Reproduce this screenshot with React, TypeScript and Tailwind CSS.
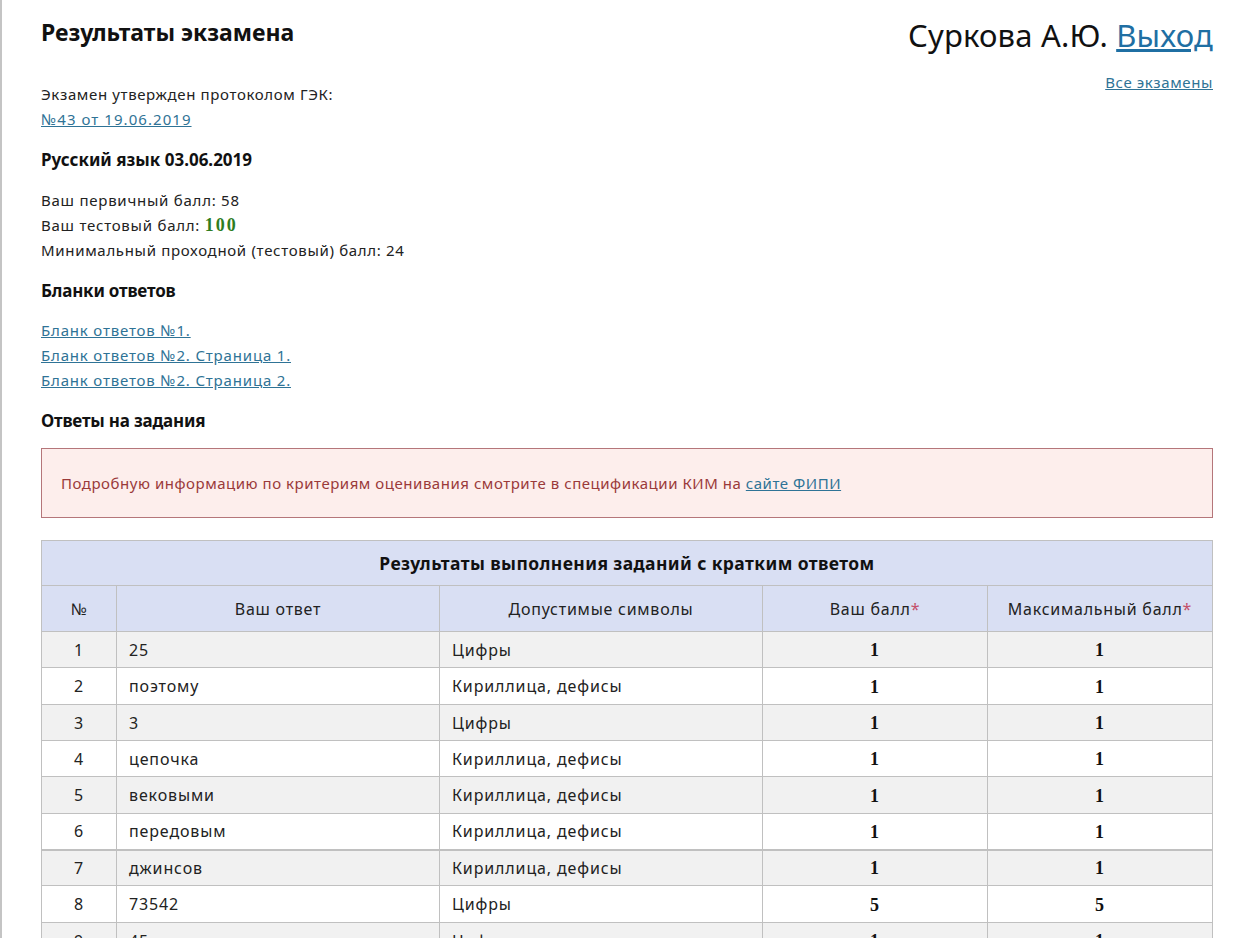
const rows = [
  ['1', '25', 'Цифры', '1', '1', 'h-[36px]'],
  ['2', 'поэтому', 'Кириллица, дефисы', '1', '1', 'h-[37px]'],
  ['3', '3', 'Цифры', '1', '1', 'h-[36px]'],
  ['4', 'цепочка', 'Кириллица, дефисы', '1', '1', 'h-[36px]'],
  ['5', 'вековыми', 'Кириллица, дефисы', '1', '1', 'h-[37px]'],
  ['6', 'передовым', 'Кириллица, дефисы', '1', '1', 'h-[36px]'],
  ['7', 'джинсов', 'Кириллица, дефисы', '1', '1', 'h-[36px]'],
  ['8', '73542', 'Цифры', '5', '5', 'h-[37px]'],
  ['9', '45', 'Цифры', '1', '1', 'h-[36px]'],
]

const linkCls = 'text-[#2f7396] underline'
const cellCls = 'border border-[#c0c0c0] p-0'
const headingCls = "text-[17px] leading-[24px] font-bold text-[#111] font-['Noto_Sans',sans-serif]"
const scoreCls = "pt-[2px] text-center font-bold text-[18px] text-[#111] font-['Liberation_Serif',serif]"

function Star() {
  return <span className="text-[#c4506a]">*</span>
}

export default function App() {
  return (
    <div className="h-[938px] overflow-hidden bg-white border-l-2 border-[#c4c4c4] pl-[39px] pr-[41px] font-['Noto_Sans',sans-serif] text-[15px] tracking-[0.75px] text-[#222]">
      <div className="flex justify-between">
        <div className="pt-[17px]">
          <h1 className="text-[23px] leading-[30px] font-bold tracking-normal text-[#111]">Результаты экзамена</h1>
          <p className="mt-[35px] leading-[25px] tracking-[0.63px]">Экзамен утвержден протоколом ГЭК:</p>
          <a className={`${linkCls} block leading-[25px] tracking-[1.05px]`}>№43 от 19.06.2019</a>
        </div>
        <div className="text-right">
          <div className="pt-[15px] text-[31px] leading-[40px] tracking-[0.2px] text-[#111]">
            Суркова А.Ю. <a className="text-[#1f6fa3] underline">Выход</a>
          </div>
          <a className={`${linkCls} block mt-[17px] leading-[20px] tracking-[0.6px]`}>Все экзамены</a>
        </div>
      </div>

      <h2 className={`mt-[16px] tracking-normal ${headingCls}`}>Русский язык 03.06.2019</h2>
      <div className="mt-[16px] leading-[25px]">
        <p>Ваш первичный балл: 58</p>
        <p>
          Ваш тестовый балл: <b className="font-['Liberation_Serif',serif] text-[18px] tracking-[2px] text-[#2e7d1e]">100</b>
        </p>
        <p className="tracking-[0.68px]">Минимальный проходной (тестовый) балл: 24</p>
      </div>

      <h2 className={`mt-[16px] tracking-[-0.2px] ${headingCls}`}>Бланки ответов</h2>
      <div className="mt-[15px] leading-[25px] tracking-[0.82px]">
        <a className={`${linkCls} block`}>Бланк ответов №1.</a>
        <a className={`${linkCls} block`}>Бланк ответов №2. Страница 1.</a>
        <a className={`${linkCls} block`}>Бланк ответов №2. Страница 2.</a>
      </div>

      <h2 className={`mt-[16px] tracking-[-0.2px] ${headingCls}`}>Ответы на задания</h2>

      <div className="mt-[15px] h-[70px] flex items-center border border-[#b5767a] bg-[#fdeeec] px-[19px] tracking-[0.53px] text-[#9a3a3a]">
        <span>
          Подробную информацию по критериям оценивания смотрите в спецификации КИМ на <a className={linkCls}>сайте ФИПИ</a>
        </span>
      </div>

      <table className="mt-[22px] w-full table-fixed border-collapse">
        <colgroup>
          <col className="w-[75px]" />
          <col className="w-[323px]" />
          <col className="w-[323px]" />
          <col className="w-[225px]" />
          <col />
        </colgroup>
        <thead className="bg-[#d9dff3] text-[16px]">
          <tr className="h-[45px]">
            <th colSpan={5} className={`${cellCls} text-[17.5px] tracking-[0.4px] font-bold text-[#111]`}>
              Результаты выполнения заданий с кратким ответом
            </th>
          </tr>
          <tr className="h-[46px]">
            <th className={`${cellCls} font-normal`}>№</th>
            <th className={`${cellCls} font-normal`}>Ваш ответ</th>
            <th className={`${cellCls} font-normal`}>Допустимые символы</th>
            <th className={`${cellCls} font-normal`}>Ваш балл<Star /></th>
            <th className={`${cellCls} font-normal`}>Максимальный балл<Star /></th>
          </tr>
        </thead>
        <tbody className="text-[16px] tracking-[0.87px]">
          {rows.map((r, i) => (
            <tr key={r[0]} className={`${r[5]} ${i % 2 === 0 ? 'bg-[#f1f1f1]' : 'bg-white'} ${r[0] === '7' ? 'border-t-2 border-[#c0c0c0]' : ''}`}>
              <td className={`${cellCls} text-center`}>{r[0]}</td>
              <td className={`${cellCls} pl-[12px]`}>{r[1]}</td>
              <td className={`${cellCls} pl-[12px]`}>{r[2]}</td>
              <td className={`${cellCls} ${scoreCls}`}>{r[3]}</td>
              <td className={`${cellCls} ${scoreCls}`}>{r[4]}</td>
            </tr>
          ))}
        </tbody>
      </table>
    </div>
  )
}
